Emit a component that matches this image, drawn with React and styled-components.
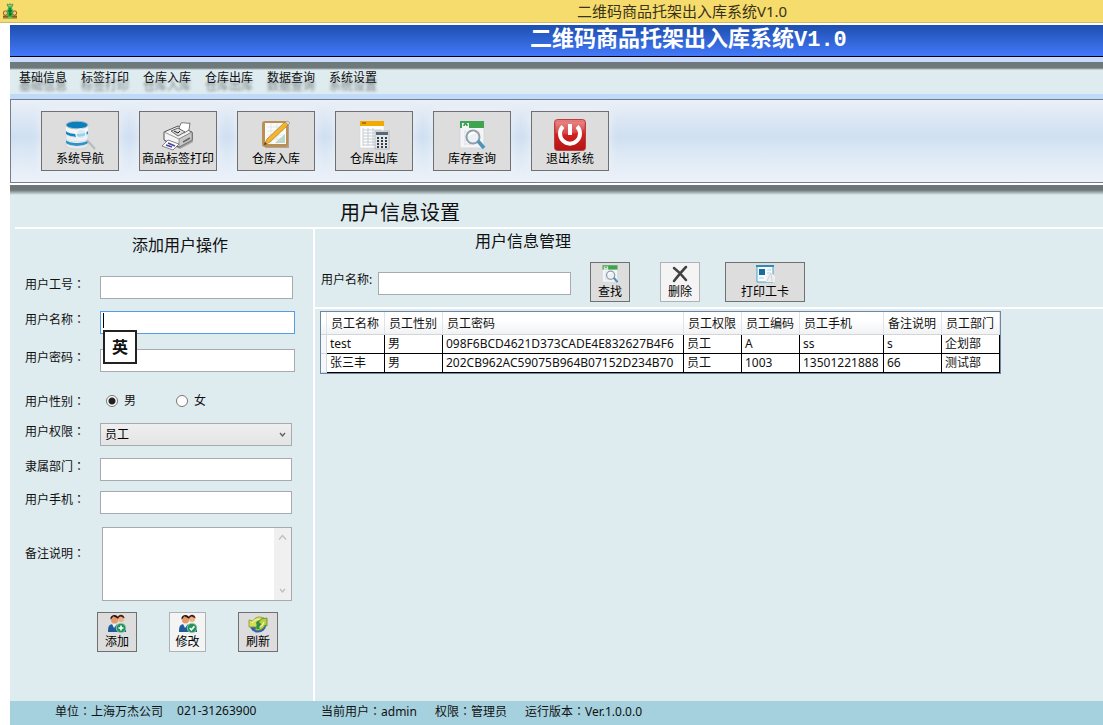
import React, { useState } from "react";
import styled, { createGlobalStyle, css } from "styled-components";

const menus = ["基础信息", "标签打印", "仓库入库", "仓库出库", "数据查询", "系统设置"];

const tools = [
  { label: "系统导航", icon: DatabaseIcon },
  { label: "商品标签打印", icon: PrinterIcon },
  { label: "仓库入库", icon: NoteIcon },
  { label: "仓库出库", icon: LedgerIcon },
  { label: "库存查询", icon: SheetSearchIcon },
  { label: "退出系统", icon: PowerIcon },
];

const columns = [
  { label: "员工名称", width: 58 },
  { label: "员工性别", width: 58 },
  { label: "员工密码", width: 241 },
  { label: "员工权限", width: 58 },
  { label: "员工编码", width: 58 },
  { label: "员工手机", width: 84 },
  { label: "备注说明", width: 58 },
  { label: "员工部门", width: 58 },
];

const users = [
  ["test", "男", "098F6BCD4621D373CADE4E832627B4F6", "员工", "A", "ss", "s", "企划部"],
  ["张三丰", "男", "202CB962AC59075B964B07152D234B70", "员工", "1003", "13501221888", "66", "测试部"],
];

export default function App() {
  const [gender, setGender] = useState("male");

  return (
    <Page>
      <GlobalStyle />
      <TitleBar>
        <AppIcon />
        <TitleText>二维码商品托架出入库系统V1.0</TitleText>
      </TitleBar>
      <Body>
        <Banner>
          <h1>
            二维码商品托架出入库系统<Version>V1.0</Version>
          </h1>
        </Banner>
        <MenuBar>
          {menus.map((menu) => (
            <MenuItem key={menu} type="button">
              {menu}
            </MenuItem>
          ))}
        </MenuBar>
        <ToolBar>
          {tools.map(({ label, icon: Icon }) => (
            <ToolButton key={label} type="button">
              <Icon size={32} />
              {label}
            </ToolButton>
          ))}
        </ToolBar>
        <Shade />
        <PageTitle>用户信息设置</PageTitle>
        <Columns>
          <FormPanel>
            <FormTitle>添加用户操作</FormTitle>
            <FormRow $top={19}>
              <Label htmlFor="no">
                用户工号<Colon>：</Colon>
              </Label>
              <Input id="no" />
            </FormRow>
            <FormRow $top={12}>
              <Label htmlFor="name">
                用户名称<Colon>：</Colon>
              </Label>
              <Input id="name" $width={195} $active />
              <Caret />
              <ImeTip>英</ImeTip>
            </FormRow>
            <FormRow $top={15}>
              <Label htmlFor="pwd">
                用户密码<Colon>：</Colon>
              </Label>
              <Input id="pwd" type="password" $width={195} />
            </FormRow>
            <FormRow $top={17}>
              <RowName>
                用户性别<Colon>：</Colon>
              </RowName>
              <RadioLabel>
                <Radio name="gender" checked={gender === "male"} onChange={() => setGender("male")} />
                男
              </RadioLabel>
              <RadioLabel>
                <Radio name="gender" checked={gender === "female"} onChange={() => setGender("female")} />
                女
              </RadioLabel>
            </FormRow>
            <FormRow $top={10}>
              <Label htmlFor="role">
                用户权限<Colon>：</Colon>
              </Label>
              <SelectBox>
                <select id="role">
                  <option>员工</option>
                  <option>管理员</option>
                </select>
                <Chevron color="#606060" />
              </SelectBox>
            </FormRow>
            <FormRow $top={12}>
              <Label htmlFor="dept">
                隶属部门<Colon>：</Colon>
              </Label>
              <Input id="dept" $width={192} />
            </FormRow>
            <FormRow $top={10}>
              <Label htmlFor="phone">
                用户手机<Colon>：</Colon>
              </Label>
              <Input id="phone" $width={192} />
            </FormRow>
            <FormRow $top={13}>
              <Label htmlFor="memo" $tall>
                备注说明<Colon>：</Colon>
              </Label>
              <MemoBox>
                <textarea id="memo" />
                <ScrollTrack>
                  <Chevron color="#c0c0c0" up />
                  <Chevron color="#c0c0c0" />
                </ScrollTrack>
              </MemoBox>
            </FormRow>
            <FormButtons>
              <SmallButton type="button">
                <UsersIcon sign="M14 11.5v5M11.5 14h5" />
                添加
              </SmallButton>
              <SmallButton type="button" $light $width={37}>
                <UsersIcon sign="M11.8 14l1.6 1.8 3-3.4" />
                修改
              </SmallButton>
              <SmallButton type="button">
                <RefreshIcon />
                刷新
              </SmallButton>
            </FormButtons>
          </FormPanel>
          <ListPanel>
            <ListTitle>用户信息管理</ListTitle>
            <SearchRow>
              <SearchLabel htmlFor="search">用户名称:</SearchLabel>
              <SearchInput id="search" />
              <SmallButton type="button">
                <SheetSearchIcon size={20} />
                查找
              </SmallButton>
              <DeleteButton type="button" $light>
                <CrossIcon />
                删除
              </DeleteButton>
              <SmallButton type="button" $width={80}>
                <CardIcon />
                打印工卡
              </SmallButton>
            </SearchRow>
            <TableWrap>
              <Table>
                <colgroup>
                  <Col $width={6} />
                  {columns.map((column) => (
                    <Col key={column.label} $width={column.width} />
                  ))}
                </colgroup>
                <thead>
                  <tr>
                    <th />
                    {columns.map((column) => (
                      <th key={column.label}>{column.label}</th>
                    ))}
                  </tr>
                </thead>
                <tbody>
                  {users.map((user) => (
                    <tr key={user[0]}>
                      <RowHead />
                      {user.map((value, idx) => (
                        <td key={idx}>{value}</td>
                      ))}
                    </tr>
                  ))}
                </tbody>
              </Table>
            </TableWrap>
          </ListPanel>
        </Columns>
        <StatusBar>
          <Company>
            <span>
              单位<Colon>：</Colon>上海万杰公司
            </span>
            <span>021-31263900</span>
          </Company>
          <Session>
            <span>
              当前用户<Colon>：</Colon>admin
            </span>
            <span>
              权限<Colon>：</Colon>管理员
            </span>
            <span>
              运行版本<Colon>：</Colon>Ver.1.0.0.0
            </span>
          </Session>
        </StatusBar>
      </Body>
    </Page>
  );
}

// icons

function AppIcon() {
  return (
    <svg width="16" height="16" viewBox="0 0 16 16">
      <path d="M5 1l2 1 1-1.500 1 1.500 2-1-1 3H6z" fill="#8fce83" stroke="#2c7d35" strokeWidth=".6" />
      <circle cx="3.500" cy="10" r="2.200" fill="#f0c88a" stroke="#a35a1c" />
      <circle cx="12.500" cy="10" r="2.200" fill="#f0c88a" stroke="#a35a1c" />
      <path d="M1 13.500h5M10 13.500h5" stroke="#a34c1c" strokeWidth="2" />
      <path d="M6.500 4h3l2 5-1.500 5H6l-1.500-5z" fill="#2fb04c" />
      <path d="M6 8h4M8 5v8M7 11h3" stroke="#08631c" />
      <path d="M1 15h14" stroke="#398333" />
    </svg>
  );
}

function DatabaseIcon({ size }) {
  return (
    <svg width={size} height={size} viewBox="3 -1 32 32">
      <path d="M5 5v19c2 5 20 5 22 0V5z" fill="#f4f5f7" />
      <ellipse cx="16" cy="5" rx="11" ry="3.800" fill="#0b7fba" stroke="#a9bac6" />
      <path d="M5 11c3 4 19 4 22 0v3c-3 4-19 4-22 0z" fill="#0f87c3" />
      <path d="M5 14c3 4 19 4 22 0v5c-3 4-19 4-22 0z" fill="#eceff2" stroke="#c1c9cf" strokeWidth=".5" />
      <path d="M5 20c3 4 19 4 22 0v3c-3 4-19 4-22 0z" fill="#2894c8" />
      <path d="M5 23c3 4 19 4 22 0v3c-3 4-19 4-22 0z" fill="#e9ecef" stroke="#b9c1c8" strokeWidth=".5" />
      <circle cx="20" cy="14" r="5" fill="#cceaf7" fillOpacity=".75" stroke="#eef7fb" strokeWidth="1.500" />
      <path d="M26 20l8 9" stroke="#b7babd" strokeWidth="2" />
    </svg>
  );
}

function PrinterIcon({ size }) {
  return (
    <svg width={size} height={size} viewBox="0 -1 32 32">
      <path d="M3 12l14-5 14 6v9l-13 7-15-7z" fill="#555" opacity=".45" />
      <path d="M2 12l14-6 14 6v8l-13 7-15-7z" fill="#f4f4f4" stroke="#555" />
      <path d="M2 12l15 7 13-7" fill="none" stroke="#999" />
      <path d="M17 19v8l13-7v-8z" fill="#c9c9c9" stroke="#777" strokeWidth=".7" />
      <path d="M17 8l2-5c3-1 6 1 9 0l-1 7-5 3z" fill="#fff" stroke="#777" />
      <path d="M9 11l7-3 7 4-7 4z" fill="#ddd" stroke="#444" strokeWidth=".8" />
      <path d="M12 11l4 2 2-2" fill="none" stroke="#222" />
      <path d="M6 20l11 4-6 6-11-4z" fill="#fff" stroke="#555" strokeWidth=".7" />
      <path d="M6 23l7 3M4 25l6 2" stroke="#4a43a0" strokeWidth="1.500" />
      <path d="M21 22l7-4" stroke="#666" strokeWidth="1.500" />
    </svg>
  );
}

function NoteIcon({ size }) {
  return (
    <svg width={size} height={size} viewBox="0 0 32 32">
      <path d="M5 4h24v25H5z" fill="#8c7765" opacity=".55" />
      <rect x="2" y="2" width="26" height="26" rx="3" fill="#b98f54" />
      <path d="M5 4h21v21H5z" fill="#fbfbfb" />
      <path d="M7 8h17M7 12h17M7 16h17M7 20h17M11 4v21M17 4v21" stroke="#dfe3e6" strokeWidth=".8" />
      <path d="M25 15v9H15z" fill="#bcd8c8" />
      <path d="M28 6L10 23l-6 3 3-6L25 3z" fill="#f3b52d" stroke="#b78325" strokeWidth=".8" />
      <path d="M25 3l3-1 2 2-2 2z" fill="#ddd5c6" stroke="#9a8b78" strokeWidth=".6" />
      <path d="M4 26l1-3 2 2z" fill="#513b26" />
    </svg>
  );
}

function LedgerIcon({ size }) {
  return (
    <svg width={size} height={size} viewBox="0 0 32 32">
      <path d="M2 3h24v26H2z" fill="#fdfdfd" stroke="#d5d5d5" strokeWidth=".6" />
      <path d="M2 2h24v5H2z" fill="#f5a800" />
      <path d="M4 4h4" stroke="#a77714" strokeWidth="2" />
      <path d="M5 11h19M5 14h19M5 17h19M5 20h12M5 23h12M5 26h12M5 9v18M10 9v18M15 9v18" stroke="#c6ccd2" />
      <rect x="17" y="12" width="14" height="18" fill="#e2e6e9" stroke="#9da3aa" strokeWidth=".6" />
      <path d="M18 13h12v3H18z" fill="#566778" />
      <path d="M19 19h2m2 0h2m2 0h2M19 22h2m2 0h2m2 0h2M19 25h2m2 0h2m2 0h2M19 28h2m2 0h2m2 0h2" stroke="#343f49" strokeWidth="2" />
    </svg>
  );
}

function SheetSearchIcon({ size }) {
  return (
    <svg width={size} height={size} viewBox="0 0 32 32">
      <path d="M4 3h24v26H4z" fill="#f4f5f6" stroke="#ccd0d2" strokeWidth=".7" />
      <path d="M4 2h24v7H4z" fill="#3fa450" />
      <path d="M6 4h7v5H6z" fill="#f2f8f3" />
      <path d="M8 7c0-3 3-3 3 0" fill="none" stroke="#32923f" strokeWidth="1.500" />
      <path d="M8 13h16M8 17h16M8 21h12M8 25h10M9 11v15M14 11v15" stroke="#dce4ed" />
      <circle cx="17" cy="18" r="6.500" fill="#eaf2f7" stroke="#929da6" strokeWidth="2" />
      <path d="M13 17c1-3 4-4 6-3" fill="none" stroke="#fff" strokeWidth="2" />
      <path d="M22 22l6 7" stroke="#4e94b9" strokeWidth="3.500" />
    </svg>
  );
}

function PowerIcon({ size }) {
  return (
    <svg width={size} height={size} viewBox="0 0 32 32">
      <defs>
        <linearGradient id="power" x2="0" y2="1">
          <stop stopColor="#e78080" />
          <stop offset=".5" stopColor="#cf2020" />
          <stop offset="1" stopColor="#b51515" />
        </linearGradient>
      </defs>
      <rect x=".5" y=".5" width="31" height="31" rx="3" fill="url(#power)" stroke="#b94040" />
      <path d="M2 14V3h28v7c-8 5-20 7-28 4z" fill="#fff" opacity=".13" />
      <path d="M9 7.500a10 10 0 1 0 14 0" fill="none" stroke="#fff" strokeWidth="4" />
      <path d="M16 5v11" stroke="#fff" strokeWidth="4" />
    </svg>
  );
}

function UsersIcon({ sign }) {
  return (
    <svg width="20" height="20" viewBox="0 0 20 20">
      <path d="M9 18c0-6 1-8 5-8 3 0 5 2 5 5v3z" fill="#1e4f87" />
      <circle cx="14" cy="5" r="3" fill="#edb181" />
      <path d="M10.500 4.500c0-5 7-5 7 0-2-1-3-2-4-2z" fill="#4b1c13" />
      <path d="M1 18c0-6 1-8 6-8s6 2 6 8z" fill="#205b99" />
      <path d="M5 10l2 4 3-4z" fill="#e8f1f5" />
      <circle cx="7.500" cy="6" r="3.500" fill="#e69a68" />
      <path d="M3.500 5.500C2.500-.5 12-.5 11.300 5 9 3.500 8 2.500 6 2.500 5 4 5 4.500 3.500 5.500z" fill="#25110e" />
      <circle cx="14" cy="14" r="4.800" fill="#24925b" stroke="#a3d9bc" strokeWidth=".8" />
      <path d={sign} fill="none" stroke="#fff" strokeWidth="1.600" />
    </svg>
  );
}

function RefreshIcon() {
  return (
    <svg width="20" height="20" viewBox="0 0 20 20">
      <ellipse cx="10" cy="12" rx="8" ry="6.500" fill="#2e5fc0" />
      <path d="M1 13V6l4 1c2-4 6-5 11-3l-2 3c-3-1-5 0-6 2l3 1-2 3z" fill="#d9dc55" stroke="#7d9a2c" strokeWidth=".8" />
      <path d="M19 4v8l-2-1c-1 4-5 6-10 5l1-3c3 0 4-1 5-3l-3-1 3-4z" fill="#b8d13d" stroke="#5a8a2a" strokeWidth=".8" />
      <path d="M4 9c2-3 5-4 8-4M16 8c-1 3-4 6-7 6" fill="none" stroke="#f3f3b2" strokeWidth="1.200" />
      <path d="M10 8v7" stroke="#299343" strokeWidth="3" />
    </svg>
  );
}

function CrossIcon() {
  return (
    <svg width="20" height="20" viewBox="0 0 20 20">
      <path d="M4 4c4 3 8 7 12 12M16 3C12 7 8 12 4 17" fill="none" stroke="#404040" strokeWidth="2.500" strokeLinecap="round" />
    </svg>
  );
}

function CardIcon() {
  return (
    <svg width="20" height="20" viewBox="0 0 20 20">
      <path d="M2 2h16v16H2z" fill="#f8fcfe" stroke="#4ba4c6" />
      <path d="M1 2h18" stroke="#2b8eba" strokeWidth="2" />
      <path d="M4 5h6v6H4z" fill="#176e9e" />
      <path d="M12 6h4M12 9h4M4 14h5" stroke="#a5d1e1" />
      <path d="M11 18v-5l4-5 5 4v6z" fill="#eef0f0" />
      <path d="M12 17l4-8 1 8" fill="none" stroke="#d0d5d7" />
    </svg>
  );
}

function Chevron({ color, up }) {
  return (
    <svg width="9" height="9" viewBox="0 0 9 9">
      <path d={up ? "M1 6.500l3.500-4L8 6.500" : "M2 3l2.500 3L7 3"} fill="none" stroke={color} strokeWidth="1.400" />
    </svg>
  );
}

const GlobalStyle = createGlobalStyle`
  * {
    box-sizing: border-box;
  }
  body {
    margin: 0;
    background: #fff;
  }
  body, button, input, select, textarea {
    font-family: "Noto Sans", "Noto Sans CJK SC", sans-serif;
    font-size: 12px;
    line-height: 16px;
    color: #111;
  }
  h1, h2, h3 {
    margin: 0;
    font-weight: normal;
  }
`;

const Page = styled.div`
  display: flex;
  flex-direction: column;
  min-height: 100vh;
  overflow: hidden;
`;

const TitleBar = styled.header`
  display: flex;
  align-items: center;
  height: 23px;
  padding-left: 2px;
  background: #f5dc6c;
  border-bottom: 1px solid #c9bb78;
`;

const TitleText = styled.span`
  margin-left: 559px;
  font-size: 15px;
  line-height: 22px;
  color: #3a3318;
  white-space: nowrap;
`;

const Body = styled.main`
  flex: 1;
  display: flex;
  flex-direction: column;
  margin: 2px 0 0 10px;
  background: #deebef;
`;

const Banner = styled.div`
  height: 45px;
  background: linear-gradient(#1d4fae, #4379fa) top / 100% 31px no-repeat,
    linear-gradient(#000 1px, #c6d9ff 1px 6px, #6f797a 6px 12px, #deebef) 0 31px / 100% 14px no-repeat;

  h1 {
    padding-left: 520px;
    font-size: 22px;
    font-weight: bold;
    line-height: 24px;
    color: #fff;
    white-space: nowrap;
  }
`;

const Version = styled.span`
  font-family: "Liberation Mono", monospace;
`;

const MenuBar = styled.nav`
  display: flex;
  gap: 14px;
  height: 29px;
  padding-left: 9px;
  border-bottom: 5px solid #c0dafa;
`;

const MenuItem = styled.button`
  height: 16px;
  padding: 0;
  border: 0;
  background: none;
  text-shadow: 0 8px 3px rgba(0, 0, 0, 0.45);
`;

const ToolBar = styled.div`
  display: flex;
  gap: 20px;
  height: 84px;
  padding: 11px 0 0 30px;
  border: 1px solid #737f8d;
  border-right: 0;
  background: linear-gradient(#eaf0f7, #cfdff2 45%, #dce8f5 65%, #edf2f9);
`;

const Shade = styled.div`
  height: 12px;
  background: linear-gradient(#fff 2px, #6c7577 2px 7px, #deebef);
`;

const buttonStyle = css`
  display: flex;
  flex-direction: column;
  align-items: center;
  padding: 0;
  border: 1px solid #707070;
  background: #dddddd;
  color: #000;
  white-space: nowrap;
`;

const ToolButton = styled.button`
  ${buttonStyle}
  width: 78px;
  height: 60px;
  padding-top: 7px;
  box-shadow: 0 0 10px rgba(240, 244, 250, 0.9);
`;

const SmallButton = styled.button`
  ${buttonStyle}
  width: ${({ $width = 40 }) => $width}px;
  height: 40px;
  padding-top: 1px;
  ${({ $light }) =>
    $light &&
    css`
      background: #f4f4f4;
      border-color: #adb2b5;
    `}
`;

const DeleteButton = styled(SmallButton)`
  margin: 0 25px 0 30px;
`;

const PageTitle = styled.h2`
  height: 34px;
  margin-left: 5px;
  padding-left: 325px;
  border-bottom: 2px solid #fff;
  font-size: 20px;
  line-height: 36px;
`;

const Columns = styled.div`
  flex: 1;
  display: flex;
`;

const FormPanel = styled.form`
  flex: none;
  width: 305px;
  padding-left: 15px;
  border-right: 2px solid #fff;
`;

const FormTitle = styled.h3`
  padding: 4px 0 0 107px;
  font-size: 16px;
  line-height: 24px;
`;

const FormRow = styled.div`
  position: relative;
  display: flex;
  margin-top: ${({ $top }) => $top}px;
`;

const Label = styled.label`
  width: 75px;
  padding-top: ${({ $tall }) => ($tall ? 18 : 0)}px;
`;

const RowName = styled.span`
  width: 81px;
  line-height: 23px;
`;

// the TC face keeps the full-width colon in the middle of its box
const Colon = styled.span`
  font-family: "Noto Sans CJK TC", sans-serif;
`;

const Input = styled.input`
  width: ${({ $width = 193 }) => $width}px;
  height: 23px;
  padding: 0 4px;
  border: 1px solid ${({ $active }) => ($active ? "#569de5" : "#a5abb0")};
  outline: none;
  background: #fff;
`;

const Caret = styled.i`
  position: absolute;
  left: 78px;
  top: 2px;
  width: 1px;
  height: 15px;
  background: #000;
`;

const ImeTip = styled.div`
  position: absolute;
  left: 78px;
  top: 19px;
  z-index: 1;
  width: 34px;
  height: 34px;
  border: 2px solid #222;
  background: #fff;
  font-size: 16px;
  font-weight: bold;
  line-height: 30px;
  text-align: center;
`;

const RadioLabel = styled.label`
  display: flex;
  align-items: center;
  gap: 6px;
  width: 70px;
  height: 23px;
`;

const Radio = styled.input.attrs({ type: "radio" })`
  appearance: none;
  width: 12px;
  height: 12px;
  margin: 0;
  border: 1px solid #777;
  border-radius: 50%;
  background: #fff;

  &:checked {
    background: radial-gradient(circle, #222 3px, #fff 4px);
  }
`;

const SelectBox = styled.div`
  position: relative;
  width: 192px;

  select {
    appearance: none;
    display: block;
    width: 100%;
    height: 23px;
    padding: 0 4px;
    border: 1px solid #a5abb0;
    border-radius: 0;
    background: linear-gradient(#efefef, #e4e4e4);
    color: #000;
  }

  svg {
    position: absolute;
    right: 5px;
    top: 7px;
    pointer-events: none;
  }
`;

const MemoBox = styled.div`
  display: flex;
  width: 190px;
  height: 74px;
  margin-left: 2px;
  border: 1px solid #a5abb0;
  background: #fff;

  textarea {
    flex: 1;
    min-width: 0;
    border: 0;
    outline: none;
    resize: none;
  }
`;

const ScrollTrack = styled.div`
  display: flex;
  flex-direction: column;
  align-items: center;
  justify-content: space-between;
  width: 17px;
  padding: 5px 0;
  background: #f0f0f0;
`;

const FormButtons = styled.div`
  display: flex;
  gap: 32px;
  margin: 11px 0 20px;
  padding-left: 72px;
`;

const ListPanel = styled.section`
  flex: 1;
  min-width: 0;
`;

const ListTitle = styled.h3`
  padding-left: 160px;
  font-size: 16px;
  line-height: 24px;
`;

const SearchRow = styled.div`
  display: flex;
  height: 56px;
  padding: 9px 0 0 6px;
  border-bottom: 2px solid #fff;
`;

const SearchLabel = styled.label`
  width: 57px;
  padding-top: 10px;
`;

const SearchInput = styled(Input)`
  margin: 10px 19px 0 0;
`;

const TableWrap = styled.div`
  padding: 2px 0 0 5px;
  overflow: hidden;
`;

const Table = styled.table`
  table-layout: fixed;
  width: 681px;
  border: 1px solid #6d86a6;
  border-spacing: 0;
  background: #fff;

  th,
  td {
    overflow: hidden;
    text-align: left;
    white-space: nowrap;
  }

  th {
    height: 23px;
    padding: 2px 0 0 4px;
    border-right: 1px solid #dfe3ea;
    border-bottom: 1px solid #d5d5d5;
    background: linear-gradient(#fff 40%, #f1f2f4);
    font-weight: normal;
  }

  th:first-child {
    padding: 0;
  }

  td {
    height: 19px;
    padding: 0 0 0 3px;
    border-right: 1px solid #000;
    border-bottom: 1px solid #000;
    line-height: 18px;
  }
`;

const Col = styled.col`
  width: ${({ $width }) => $width}px;
`;

const RowHead = styled.td`
  && {
    padding: 0;
    border-color: #d5d9de;
    background: #f7f8fa;
  }
`;

const StatusBar = styled.footer`
  display: flex;
  height: 24px;
  background: #a5d0dd;
  line-height: 20px;
  white-space: nowrap;
`;

const Company = styled.div`
  display: flex;
  gap: 14px;
  width: 311px;
  padding-left: 45px;
`;

const Session = styled.div`
  display: flex;
  gap: 18px;
`;
